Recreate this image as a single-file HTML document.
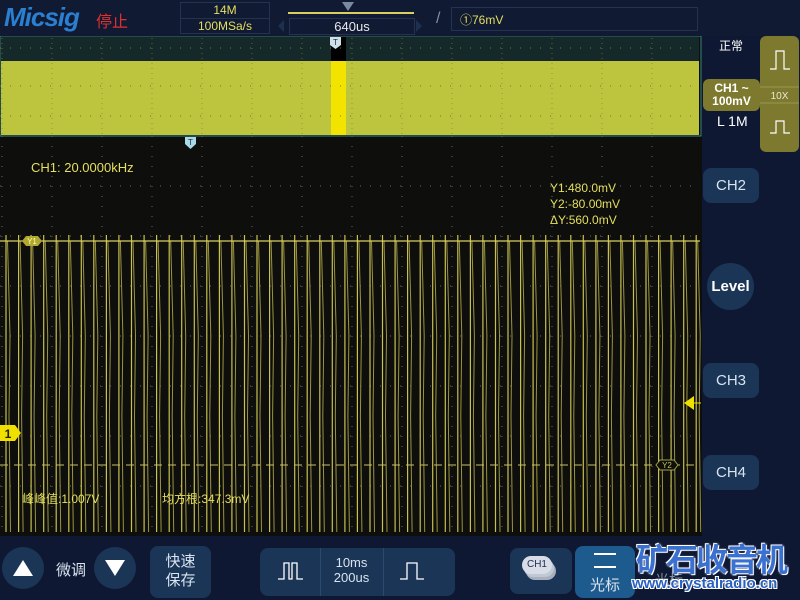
<!DOCTYPE html>
<html><head><meta charset="utf-8"><style>
*{margin:0;padding:0;box-sizing:border-box}
body{width:800px;height:600px;background:#0f1833;position:relative;overflow:hidden;font-family:"Liberation Sans","Noto Sans CJK SC",sans-serif;color:#fff}
.a{position:absolute}
.btn{position:absolute;background:#1b3556;border-radius:8px;color:#d8e4f0;text-align:center}
.yl{color:#e6df60}
</style></head><body>
<div class="a" style="left:0;top:0;width:800px;height:36px;background:#101a33"></div>
<div class="a" style="left:4px;top:2px;font:italic bold 26px 'Liberation Sans',sans-serif;color:#2a7fd0;letter-spacing:-1px">Micsig</div>
<div class="a" style="left:96px;top:8px;font-size:16px;color:#e03030">停止</div>
<div class="a" style="left:180px;top:2px;width:90px;height:32px;border:1px solid #24324f"></div>
<div class="a yl" style="left:180px;top:3px;width:90px;text-align:center;font-size:12px">14M</div>
<div class="a" style="left:180px;top:18px;width:90px;border-top:1px solid #24324f"></div>
<div class="a yl" style="left:180px;top:19px;width:90px;text-align:center;font-size:12px">100MSa/s</div>
<div class="a" style="left:288px;top:12px;width:126px;height:2px;background:#d8d060"></div>
<div class="a" style="left:342px;top:2px;width:0;height:0;border-left:6px solid transparent;border-right:6px solid transparent;border-top:9px solid #7a8aa0"></div>
<div class="a" style="left:289px;top:18px;width:126px;height:17px;border:1px solid #24324f;text-align:center;font-size:13px;color:#e8e8e8">640us</div>
<div class="a" style="left:278px;top:20px;border-top:6px solid transparent;border-bottom:6px solid transparent;border-right:6px solid #1e3050"></div>
<div class="a" style="left:416px;top:20px;border-top:6px solid transparent;border-bottom:6px solid transparent;border-left:6px solid #1e3050"></div>
<div class="a" style="left:436px;top:10px;color:#8090a8;font-size:16px">/</div>
<div class="a yl" style="left:451px;top:7px;width:247px;height:24px;border:1px solid #24324f;font-size:12px;padding:3px 0 0 8px">①76mV</div>

<svg class="a" style="left:0;top:36px" width="702" height="500" id="scr">
<rect x="0" y="0" width="702" height="500" fill="#0e0e0c"/>
<rect x="1" y="1" width="698" height="24" fill="#15282a"/>
<rect x="1" y="25" width="698" height="74" fill="#bdc43e"/>
<rect x="331" y="25" width="15" height="74" fill="#f2e400"/>
<rect x="331" y="1" width="15" height="24" fill="#000"/>
<rect x="0" y="0" width="701" height="100" fill="none" stroke="#3a8a8a" stroke-width="1"/>
<path d="M330 1h11v8l-5.5 4l-5.5-4z" fill="#cfe0e8" transform="translate(0,0)"/>
<text x="335.5" y="9" font-size="8" fill="#203040" text-anchor="middle" font-family="Liberation Sans">T</text>
<path d="M185 101h11v7l-5.5 5l-5.5-5z" fill="#a9d8e8"/>
<text x="190.5" y="109" font-size="8" fill="#203040" text-anchor="middle" font-family="Liberation Sans">T</text>
<g id="g"></g>
<line x1="0" y1="205" x2="700" y2="205" stroke="#d8d060" stroke-width="1.2"/>
<line x1="0" y1="429" x2="700" y2="429" stroke="#c8c060" stroke-width="1" stroke-dasharray="8,6"/>
<path d="M22 205l4-5h12l4 5l-4 5h-12z" fill="#b0a830"/>
<text x="32" y="208" font-size="8" fill="#ffffa0" text-anchor="middle" font-family="Liberation Sans">Y1</text>
<path d="M656 429l4-5h14l4 5l-4 5h-14z" fill="#0e0e0c" stroke="#a0a040"/>
<text x="667" y="432" font-size="8" fill="#c0c060" text-anchor="middle" font-family="Liberation Sans">Y2</text>
<path d="M0 389h15l6 8l-6 8h-15z" fill="#f0e000"/>
<text x="8" y="402" font-size="12" font-weight="bold" fill="#202000" text-anchor="middle" font-family="Liberation Sans">1</text>
<path d="M684 367l10-7v14z" fill="#f0e000"/>
<line x1="692" y1="367" x2="701" y2="367" stroke="#f0e000"/>
<text x="31" y="136" font-size="13" fill="#e6df60" font-family="Liberation Sans">CH1: 20.0000kHz</text>
<text x="550" y="156" font-size="12" fill="#e6df60" font-family="Liberation Sans">Y1:480.0mV</text>
<text x="550" y="172" font-size="12" fill="#e6df60" font-family="Liberation Sans">Y2:-80.00mV</text>
<text x="550" y="188" font-size="12" fill="#e6df60" font-family="Liberation Sans">ΔY:560.0mV</text>
<text x="22" y="467" font-size="12" fill="#e6df60" font-family="Liberation Sans,Noto Sans CJK SC">峰峰值:1.007V</text>
<text x="162" y="467" font-size="12" fill="#e6df60" font-family="Liberation Sans,Noto Sans CJK SC">均方根:347.3mV</text>
</svg>
<script>
var g=document.getElementById('g'),s='';
for(var x=2;x<=700;x+=50){s+='<line x1="'+x+'" y1="2" x2="'+x+'" y2="99" stroke="#7a8a30" stroke-dasharray="1,4" opacity="0.7"/>';s+='<line x1="'+x+'" y1="100" x2="'+x+'" y2="500" stroke="#666" stroke-dasharray="1,9"/>';}
[12,50,80,150,200,250,300,350,400,450].forEach(function(y){s+='<line x1="0" y1="'+y+'" x2="700" y2="'+y+'" stroke="'+(y<100?'#6a7a30':'#666')+'" stroke-dasharray="1,9"/>';});
for(var x=6;x<700;x+=12.55){s+='<line x1="'+x.toFixed(1)+'" y1="199" x2="'+x.toFixed(1)+'" y2="496" stroke="#c8c050" stroke-width="1.2"/>';s+='<polyline points="'+(x+1.5).toFixed(1)+',205 '+(x+4).toFixed(1)+',300 '+(x+3).toFixed(1)+',380 '+(x+4.5).toFixed(1)+',496" fill="none" stroke="#9a9440" stroke-width="1"/>';}
g.innerHTML=s;
</script>

<div class="a" style="left:719px;top:37px;font-size:12px">正常</div>
<div class="a" style="left:760px;top:36px;width:39px;height:116px;background:#7d7a30;border-radius:6px"></div>
<svg class="a" style="left:760px;top:36px" width="39" height="116"><path d="M10 33h6v-18h8v18h6" fill="none" stroke="#fff" stroke-width="1.2"/><line x1="0" y1="51" x2="39" y2="51" stroke="#9a9650"/><line x1="0" y1="67" x2="39" y2="67" stroke="#9a9650"/><path d="M10 97h6v-12h8v12h6" fill="none" stroke="#fff" stroke-width="1.2"/><text x="19.5" y="63" font-size="10" fill="#e8e8d0" text-anchor="middle" font-family="Liberation Sans">10X</text></svg>
<div class="a" style="left:703px;top:79px;width:57px;height:32px;background:#7d7a30;border-radius:6px;font-size:12px;font-weight:bold;text-align:center;line-height:13px;padding-top:3px">CH1 ~<br>100mV</div>
<div class="a" style="left:717px;top:113px;font-size:14px">L 1M</div>
<div class="btn" style="left:703px;top:168px;width:56px;height:35px;line-height:35px;font-size:15px">CH2</div>
<div class="a" style="left:707px;top:263px;width:47px;height:47px;border-radius:50%;background:#1b3556;text-align:center;line-height:47px;font-size:15px;font-weight:bold">Level</div>
<div class="btn" style="left:703px;top:363px;width:56px;height:35px;line-height:35px;font-size:15px">CH3</div>
<div class="btn" style="left:703px;top:455px;width:56px;height:35px;line-height:35px;font-size:15px">CH4</div>

<div class="a" style="left:2px;top:547px;width:42px;height:42px;border-radius:50%;background:#1b3556"></div>
<div class="a" style="left:13px;top:560px;border-left:10px solid transparent;border-right:10px solid transparent;border-bottom:16px solid #fff"></div>
<div class="a" style="left:56px;top:559px;font-size:15px;color:#d8e4f0">微调</div>
<div class="a" style="left:94px;top:547px;width:42px;height:42px;border-radius:50%;background:#1b3556"></div>
<div class="a" style="left:105px;top:560px;border-left:10px solid transparent;border-right:10px solid transparent;border-top:16px solid #fff"></div>
<div class="btn" style="left:150px;top:546px;width:61px;height:52px;font-size:15px;line-height:19px;padding-top:6px">快速<br>保存</div>
<div class="btn" style="left:260px;top:548px;width:195px;height:48px"></div>
<div class="a" style="left:320px;top:548px;width:1px;height:48px;background:#2a4a70"></div>
<div class="a" style="left:383px;top:548px;width:1px;height:48px;background:#2a4a70"></div>
<svg class="a" style="left:260px;top:548px" width="195" height="48"><path d="M18 31h6v-16h5v16h3v-16h5v16h6" fill="none" stroke="#fff" stroke-width="1.3"/><path d="M140 31h7v-16h10v16h7" fill="none" stroke="#fff" stroke-width="1.3"/></svg>
<div class="a" style="left:320px;top:555px;width:63px;text-align:center;font-size:13px;line-height:15px;color:#d8e4f0">10ms<br>200us</div>
<div class="btn" style="left:510px;top:548px;width:62px;height:46px"></div>
<div class="a" style="left:522px;top:556px;width:30px;height:18px;border-radius:9px;background:#d8dde8;color:#203050;font-size:10px;text-align:center;line-height:18px;box-shadow:2px 3px 0 #c0c8d4,4px 6px 0 #a8b0c0">CH1</div>
<div class="btn" style="left:575px;top:546px;width:60px;height:52px;background:#1d5a8e;font-size:15px;padding-top:28px">光标</div>
<div class="a" style="left:594px;top:553px;width:22px;height:2px;background:#fff"></div>
<div class="a" style="left:594px;top:566px;width:22px;height:2px;background:#fff"></div>
<div class="a" style="left:655px;top:570px;font-size:14px;color:#8090a0">光标</div>
<div class="a" style="left:636px;top:535px;font-size:32px;font-weight:bold;color:#3a70d0;letter-spacing:-2px;text-shadow:0 0 2px #fff,1px 1px 0 #fff,-1px -1px 0 #fff">矿石收音机</div>
<div class="a" style="left:632px;top:575px;font-size:15px;font-weight:bold;color:#2a60c0;text-shadow:1px 1px 0 #fff,-1px -1px 0 #fff,1px -1px 0 #fff,-1px 1px 0 #fff">www.crystalradio.cn</div>
</body></html>
